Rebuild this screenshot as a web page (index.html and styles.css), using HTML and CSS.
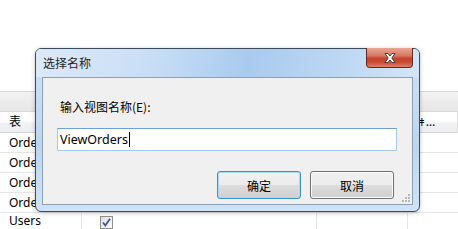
FILE: index.html
```html
<!DOCTYPE html>
<html lang="zh-CN">
<head>
  <meta charset="UTF-8" />
  <title>选择名称</title>
  <link rel="stylesheet" href="styles.css">
</head>
<body>

  <div class="page">
    <div class="blank"></div>
    <div class="toolbar"></div>

    <div class="grid">
      <div class="row head">
        <div class="cell c1">表</div>
        <div class="cell c2"></div>
        <div class="cell c3"></div>
        <div class="cell c4"><span class="sort">ǂ</span>…</div>
      </div>
      <div class="row"><div class="cell c1">Orders</div><div class="cell c2"></div><div class="cell c3"></div><div class="cell c4"></div></div>
      <div class="row"><div class="cell c1">Orders</div><div class="cell c2"></div><div class="cell c3"></div><div class="cell c4"></div></div>
      <div class="row"><div class="cell c1">Orders</div><div class="cell c2"></div><div class="cell c3"></div><div class="cell c4"></div></div>
      <div class="row"><div class="cell c1">Orders</div><div class="cell c2"></div><div class="cell c3"></div><div class="cell c4"></div></div>
      <div class="row last">
        <div class="cell c1">Users</div>
        <div class="cell c2">
          <span class="check">
            <svg width="11" height="11" viewBox="0 0 11 11"><path d="M2 5.5 L4.3 8.5 L9 1.8" fill="none" stroke="#3b5a99" stroke-width="1.8"/></svg>
          </span>
        </div>
        <div class="cell c3"></div>
        <div class="cell c4"></div>
      </div>
    </div>
  </div>

  <!-- dialog window -->
  <div class="dialog">
    <div class="titlebar">
      <span class="title">选择名称</span>
      <button class="close">
        <svg width="16" height="12" viewBox="0 0 16 12">
          <path d="M3 1.5 H6 L8 4 L10 1.5 H13 L9.8 6 L13 10.5 H10 L8 8 L6 10.5 H3 L6.2 6 Z" fill="#fff" stroke="#4a3a3a" stroke-width="1" stroke-linejoin="round"/>
        </svg>
      </button>
    </div>
    <div class="client">
      <label class="prompt">输入视图名称(E):</label>
      <div class="field"><span class="value">ViewOrders</span><span class="caret"></span></div>
      <div class="actions">
        <button class="btn default">确定</button>
        <button class="btn">取消</button>
      </div>
      <span class="grip">
        <svg width="10" height="10" viewBox="0 0 10 10" fill="#b8b8b8">
          <rect x="7" y="1" width="2" height="2"/>
          <rect x="4" y="4" width="2" height="2"/><rect x="7" y="4" width="2" height="2"/>
          <rect x="1" y="7" width="2" height="2"/><rect x="4" y="7" width="2" height="2"/><rect x="7" y="7" width="2" height="2"/>
        </svg>
      </span>
    </div>
  </div>

</body>
</html>
```

FILE: styles.css
```css
* { box-sizing: border-box; margin: 0; padding: 0; }
body {
  width: 458px;
  height: 229px;
  overflow: hidden;
  background: #fff;
  font-family: "Noto Sans", "Noto Sans CJK SC", sans-serif;
  font-size: 12px;
  color: #000;
  position: relative;
}

.blank { height: 91px; }
.toolbar {
  height: 21px;
  border-top: 1px solid #d5d5d5;
  background: linear-gradient(#f3f3f3, #e6e6e6);
  border-bottom: 1px solid #d8d8d8;
}

.row {
  display: grid;
  grid-template-columns: 82px 235px 91px 50px;
  height: 20px;
  border-bottom: 1px solid #e6e6e6;
}
.row.head {
  height: 21px;
  background: linear-gradient(#fff 0%, #fff 45%, #f1f2f4 55%, #eceef1 100%);
  border-bottom: 1px solid #d5d5d5;
}
.row.last { height: 17px; border-bottom: none; }
.cell {
  border-right: 1px solid #e6e6e6;
  padding-left: 9px;
  line-height: 19px;
  white-space: nowrap;
  overflow: hidden;
}
.last .c1 { line-height: 14px; padding-top: 1px; }
.head .cell { border-right: 1px solid #dcdcdc; line-height: 20px; }
.c4 { padding-left: 11px; border-right: none; letter-spacing: 1px; }
.sort { font-size: 11px; }
.c2 { padding-left: 18px; display: flex; align-items: center; }
.last .c2 { align-items: flex-start; padding-top: 3px; }
.check {
  width: 13px;
  height: 13px;
  border: 1px solid #8f8f8f;
  background: linear-gradient(135deg, #e0e0e0, #fafafa);
  display: flex;
  align-items: center;
  justify-content: center;
}

/* dialog */
.dialog {
  position: absolute;
  left: 35px;
  top: 48px;
  width: 385px;
  height: 164px;
  border: 1px solid #3b4a5c;
  border-radius: 6px;
  background: linear-gradient(180deg, #cfe2f6 0%, #bcd6f0 60%, #cfe3f7 100%);
  box-shadow: 0 1px 4px rgba(0,0,0,0.25);
  padding: 0 6px 6px 6px;
  display: flex;
  flex-direction: column;
}
.titlebar {
  height: 28px;
  display: flex;
  align-items: flex-start;
  justify-content: space-between;
  margin: 0 -6px;
  padding: 0 6px 0 7px;
  border-radius: 5px 5px 0 0;
  background: linear-gradient(100deg, #dce9f8 0%, #c9def5 30%, #a9cbef 55%, #b9d5f2 75%, #d3e5f8 100%);
}
.title {
  font-family: "Noto Sans CJK SC", sans-serif;
  font-size: 12px;
  line-height: 28px;
  color: #1e1e1e;
}
.close {
  width: 47px;
  height: 20px;
  margin-top: -1px;
  border: 1px solid #5e2c25;
  border-top: none;
  border-radius: 0 0 4px 4px;
  background: linear-gradient(#e9a693 0%, #d77a64 40%, #c3432c 55%, #c94c35 75%, #e0826a 100%);
  display: flex;
  align-items: center;
  justify-content: center;
}

.client {
  flex: 1;
  background: #f0f0f0;
  border: 1px solid #8c9fb6;
  padding: 20px 15px 0 14px;
  position: relative;
  display: flex;
  flex-direction: column;
}
.prompt {
  font-family: "Noto Sans CJK SC", sans-serif;
  font-size: 12px;
  line-height: 18px;
  margin-left: 3px;
}
.field {
  margin-top: 12px;
  height: 23px;
  background: #fff;
  border: 1px solid #a8c9ea;
  border-top-color: #6fa2d3;
  display: flex;
  align-items: center;
  padding-left: 2px;
  font-size: 12.5px;
}
.caret {
  width: 1px;
  height: 15px;
  background: #000;
  margin-left: 1px;
}
.actions {
  display: flex;
  justify-content: flex-end;
  gap: 9px;
  margin-top: 20px;
  margin-right: 3px;
}
.btn {
  width: 84px;
  height: 28px;
  border: 1px solid #707070;
  border-radius: 3px;
  background: linear-gradient(#f2f2f2 0%, #ebebeb 49%, #dddddd 50%, #cfcfcf 100%);
  font-family: "Noto Sans CJK SC", sans-serif;
  font-size: 12px;
  color: #000;
  box-shadow: inset 0 0 0 1px #fcfcfc;
}
.btn.default {
  border-color: #3a8fd6;
  box-shadow: inset 0 0 0 1px #a6dcf8;
}
.grip {
  position: absolute;
  right: 1px;
  bottom: 1px;
  display: flex;
}
```
